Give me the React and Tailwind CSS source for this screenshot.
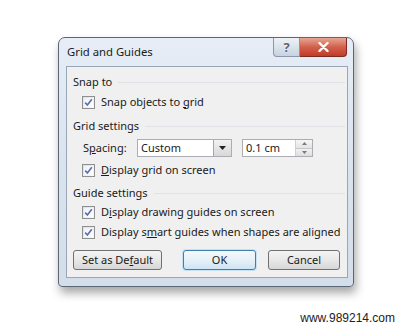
import React from "react";

const font = { fontFamily: '"Noto Sans", "Open Sans", sans-serif' };

function Check() {
  return (
    <div className="w-[13px] h-[13px] border border-[#8e8f8f] bg-gradient-to-br from-[#dedede] to-[#fafafa] flex items-center justify-center shrink-0">
      <div className="w-[9px] h-[9px] bg-gradient-to-br from-[#eef1f6] to-[#ffffff] flex items-center justify-center">
        <svg width="9" height="9" viewBox="0 0 9 9">
          <path d="M1.2 4.6 L3.4 7 L7.8 1.2" fill="none" stroke="#5670ad" strokeWidth="1.6" />
        </svg>
      </div>
    </div>
  );
}

function Header({ children, mt }) {
  return (
    <div className={`flex items-center h-[20px] pl-[6px] pr-[2px] ${mt}`}>
      <span className="text-[11px] text-[#1a1a1a] whitespace-nowrap">{children}</span>
      <div className="flex-1 h-px bg-[#dfe3e8] ml-[6px]" />
    </div>
  );
}

function CheckRow({ children, mt, h = "h-[20px]" }) {
  return (
    <div className={`flex items-center ${h} pl-[15px] ${mt}`}>
      <Check />
      <span className="ml-[6px] text-[11px] text-[#1a1a1a] whitespace-nowrap">{children}</span>
    </div>
  );
}

function Btn({ children, w, def, ml }) {
  return (
    <div
      className={`${w} ${ml} h-[20px] rounded-[3px] border flex items-center justify-center text-[11px] text-[#1a1a1a] ${
        def
          ? "border-[#3c7fb1] shadow-[0_0_0_1px_#c4e2f3] bg-gradient-to-b from-[#f4f9fc] via-[#e6f1f8] to-[#cfe4f1]"
          : "border-[#707070] bg-gradient-to-b from-[#f4f4f4] via-[#e8e8e8] to-[#d6d6d6]"
      }`}
    >
      {children}
    </div>
  );
}

export default function App() {
  return (
    <div className="w-[410px] h-[327px] bg-white flex flex-col" style={font}>
      <div className="pl-[58px] pt-[37px]">
        <div className="w-[296px] h-[250px] rounded-t-[7px] rounded-b-[4px] border border-[#5c6775] bg-gradient-to-b from-[#e6edf6] via-[#dae4ef] to-[#d3deea] shadow-[2px_6px_10px_rgba(0,0,0,0.35)] flex flex-col">
          {/* title bar */}
          <div className="h-[28px] flex items-start">
            <span className="ml-[8px] mt-[6px] text-[11.3px] text-[#1a1a1a] leading-[16px]">Grid and Guides</span>
            <div className="flex-1" />
            <div className="flex mr-[6px]">
              <div className="w-[27px] h-[19px] border border-t-0 border-[#8a97a8] rounded-bl-[4px] bg-gradient-to-b from-[#eef2f7] to-[#c7d3e0] flex items-center justify-center">
                <span className="text-[13px] font-bold text-[#5b6573] leading-none" style={{ textShadow: "0 0 2px #fff" }}>?</span>
              </div>
              <div className="w-[47px] h-[19px] border border-t-0 border-l-0 border-[#7d2a20] rounded-br-[4px] bg-gradient-to-b from-[#e6a594] via-[#d2604b] to-[#c23a28] flex items-center justify-center">
                <svg width="11" height="10" viewBox="0 0 11 10">
                  <path d="M1.5 1 L9.5 9 M9.5 1 L1.5 9" stroke="#ffffff" strokeWidth="2.4" strokeLinecap="round" />
                </svg>
              </div>
            </div>
          </div>
          {/* panel */}
          <div className="ml-[7px] mr-[5px] h-[212px] border border-[#98a6b6] bg-[#f0f0f0] flex flex-col pt-[5px]">
            <Header>Snap to</Header>
            <CheckRow>
              Snap objects to <span className="underline">g</span>rid
            </CheckRow>
            <Header mt="mt-[4px]">Grid settings</Header>
            <div className="flex items-center h-[20px] mt-[2px] pl-[16px]">
              <span className="text-[11px] text-[#1a1a1a] w-[54px]">
                S<span className="underline">p</span>acing:
              </span>
              <div className="w-[95px] h-[18px] border border-[#abadb3] bg-white flex items-center">
                <span className="ml-[3px] text-[11px] text-[#1a1a1a] flex-1">Custom</span>
                <div className="w-[18px] h-[16px] border-l border-[#a5a5a5] bg-gradient-to-b from-[#f2f2f2] to-[#d8d8d8] flex items-center justify-center">
                  <svg width="7" height="4" viewBox="0 0 7 4">
                    <path d="M0 0 L7 0 L3.5 4 Z" fill="#222" />
                  </svg>
                </div>
              </div>
              <div className="ml-[10px] w-[71px] h-[18px] border border-[#abadb3] bg-white flex items-center">
                <span className="ml-[3px] text-[11px] text-[#1a1a1a] flex-1">0.1 cm</span>
                <div className="w-[17px] h-[16px] border-l border-[#d0d0d0] flex flex-col">
                  <div className="flex-1 bg-gradient-to-b from-[#f6f6f6] to-[#e4e4e4] border-b border-[#c8c8c8] flex items-center justify-center">
                    <svg width="5" height="3" viewBox="0 0 5 3"><path d="M0 3 L5 3 L2.5 0 Z" fill="#7a7a7a" /></svg>
                  </div>
                  <div className="flex-1 bg-gradient-to-b from-[#f0f0f0] to-[#dedede] flex items-center justify-center">
                    <svg width="5" height="3" viewBox="0 0 5 3"><path d="M0 0 L5 0 L2.5 3 Z" fill="#7a7a7a" /></svg>
                  </div>
                </div>
              </div>
            </div>
            <CheckRow mt="mt-[2px]">
              <span className="underline">D</span>isplay grid on screen
            </CheckRow>
            <Header mt="mt-[3px]">Guide settings</Header>
            <CheckRow h="h-[19px]">
              D<span className="underline">i</span>splay drawing guides on screen
            </CheckRow>
            <CheckRow>
              Display s<span className="underline">m</span>art guides when shapes are aligned
            </CheckRow>
            <div className="flex items-center mt-[8px] pl-[6px]">
              <Btn w="w-[89px]">
                Set as De<span className="underline">f</span>ault
              </Btn>
              <Btn w="w-[73px]" ml="ml-[21px]" def>
                OK
              </Btn>
              <Btn w="w-[72px]" ml="ml-[12px]">
                Cancel
              </Btn>
            </div>
          </div>
        </div>
      </div>
      <div className="mt-[24px] flex justify-end pr-[15px] h-[14px] items-center">
        <span className="text-[12px] text-[#222]" style={{ fontFamily: '"Liberation Sans", Arial, sans-serif' }}>
          www.989214.com
        </span>
      </div>
    </div>
  );
}
